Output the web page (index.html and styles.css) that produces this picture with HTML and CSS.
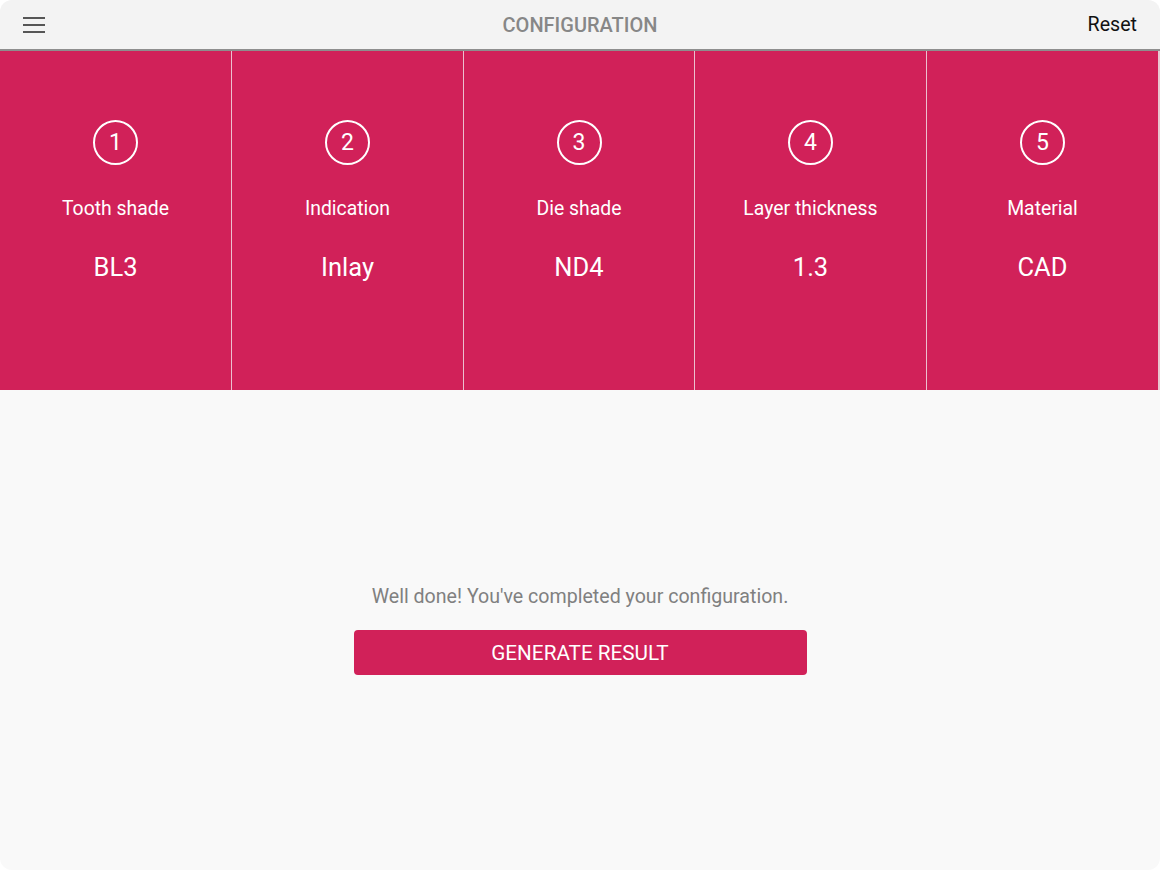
FILE: index.html
```html
<!DOCTYPE html>
<html>
<head>
<meta charset="utf-8">
<link rel="stylesheet" href="styles.css">
</head>
<body>
<div class="app">
  <header class="topbar">
    <button class="menu" aria-label="Menu">
      <svg width="24" height="18" viewBox="0 0 24 18"><g stroke="#222" stroke-width="1.6"><line x1="1" y1="2" x2="23" y2="2"/><line x1="1" y1="9" x2="23" y2="9"/><line x1="1" y1="16" x2="23" y2="16"/></g></svg>
    </button>
    <div class="title">CONFIGURATION</div>
    <div class="reset">Reset</div>
  </header>
  <section class="steps">
    <div class="step"><div class="num">1</div><div class="label">Tooth shade</div><div class="value">BL3</div></div>
    <div class="step"><div class="num">2</div><div class="label">Indication</div><div class="value">Inlay</div></div>
    <div class="step"><div class="num">3</div><div class="label">Die shade</div><div class="value">ND4</div></div>
    <div class="step"><div class="num">4</div><div class="label">Layer thickness</div><div class="value">1.3</div></div>
    <div class="step"><div class="num">5</div><div class="label">Material</div><div class="value">CAD</div></div>
  </section>
  <main class="content">
    <p class="msg">Well done! You've completed your configuration.</p>
    <button class="generate">GENERATE RESULT</button>
  </main>
</div>
</body>
</html>
```
FILE: styles.css
```css
* { box-sizing: border-box; }
html, body { margin: 0; padding: 0; background: #fff; }
body { font-family: Roboto, "Noto Sans", sans-serif; }
.app {
  width: 1160px;
  height: 870px;
  border-radius: 12px;
  overflow: hidden;
  background: #f9f9f9;
  display: flex;
  flex-direction: column;
}
.topbar {
  height: 51px;
  flex: none;
  background: #f3f3f3;
  border-bottom: 2px solid #8e8e8e;
  display: flex;
  align-items: center;
  justify-content: space-between;
  padding: 0 23px 0 22px;
  position: relative;
}
.menu {
  border: 0;
  background: none;
  padding: 0;
  width: 24px;
  height: 18px;
  display: flex;
}
.title {
  position: absolute;
  left: 0;
  right: 0;
  text-align: center;
  font-size: 20px;
  font-weight: 500;
  color: #878787;
  pointer-events: none;
}
.reset {
  font-size: 19.6px;
  color: #111;
}
.steps {
  height: 339px;
  flex: none;
  display: grid;
  grid-template-columns: 231px 232px 231px 232px 232px;
  background: #d12159;
  border-right: 2px solid #e9c6d0;
}
.step {
  display: flex;
  flex-direction: column;
  align-items: center;
  color: #fff;
  padding-top: 69px;
  border-left: 1px solid #ecc0ce;
}
.step:first-child { border-left: 0; }
.num {
  width: 45px;
  height: 45px;
  border: 2px solid #fff;
  border-radius: 50%;
  display: flex;
  align-items: center;
  justify-content: center;
  font-size: 23px;
  line-height: 1;
}
.label {
  margin-top: 32px;
  font-size: 19.4px;
  line-height: 24px;
}
.value {
  margin-top: 31px;
  font-size: 25.5px;
  line-height: 30px;
}
.content {
  flex: 1;
  display: flex;
  flex-direction: column;
  align-items: center;
  padding-top: 195px;
}
.msg {
  margin: 0;
  font-size: 19.6px;
  line-height: 24px;
  color: #808080;
}
.generate {
  margin-top: 21px;
  width: 453px;
  height: 45px;
  border: 0;
  border-radius: 4px;
  background: #d12159;
  color: #fff;
  font-family: Roboto, "Noto Sans", sans-serif;
  font-size: 20.7px;
}
```
